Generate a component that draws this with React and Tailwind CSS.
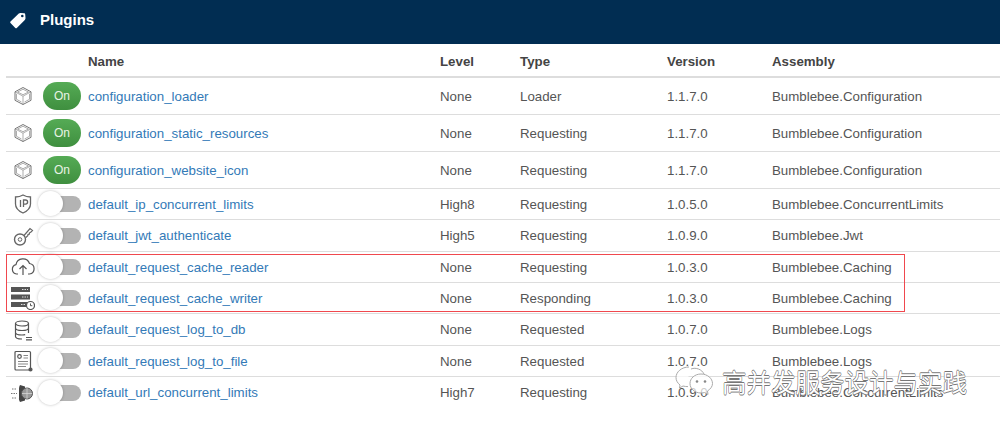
import React from 'react';

const plugins = [
  { icon: 'box', on: true, name: 'configuration_loader', level: 'None', type: 'Loader', version: '1.1.7.0', assembly: 'Bumblebee.Configuration', h: 'h-[37px]' },
  { icon: 'box', on: true, name: 'configuration_static_resources', level: 'None', type: 'Requesting', version: '1.1.7.0', assembly: 'Bumblebee.Configuration', h: 'h-[37px]' },
  { icon: 'box', on: true, name: 'configuration_website_icon', level: 'None', type: 'Requesting', version: '1.1.7.0', assembly: 'Bumblebee.Configuration', h: 'h-[37px]' },
  { icon: 'ip', on: false, name: 'default_ip_concurrent_limits', level: 'High8', type: 'Requesting', version: '1.0.5.0', assembly: 'Bumblebee.ConcurrentLimits', h: 'h-[31px]' },
  { icon: 'key', on: false, name: 'default_jwt_authenticate', level: 'High5', type: 'Requesting', version: '1.0.9.0', assembly: 'Bumblebee.Jwt', h: 'h-[32px]' },
  { icon: 'cloud', on: false, name: 'default_request_cache_reader', level: 'None', type: 'Requesting', version: '1.0.3.0', assembly: 'Bumblebee.Caching', h: 'h-[31px]' },
  { icon: 'server', on: false, name: 'default_request_cache_writer', level: 'None', type: 'Responding', version: '1.0.3.0', assembly: 'Bumblebee.Caching', h: 'h-[31px]' },
  { icon: 'db', on: false, name: 'default_request_log_to_db', level: 'None', type: 'Requested', version: '1.0.7.0', assembly: 'Bumblebee.Logs', h: 'h-[32px]' },
  { icon: 'file', on: false, name: 'default_request_log_to_file', level: 'None', type: 'Requested', version: '1.0.7.0', assembly: 'Bumblebee.Logs', h: 'h-[31px]' },
  { icon: 'limit', on: false, name: 'default_url_concurrent_limits', level: 'High7', type: 'Requesting', version: '1.0.9.0', assembly: 'Bumblebee.ConcurrentLimits', h: 'h-[31px] border-b-0' },
];

const RowIcon = ({ kind }) => {
  const common = { width: 24, height: 24, viewBox: '0 0 24 24', fill: 'none', stroke: '#777', strokeWidth: 1 };
  if (kind === 'box') {
    return (
      <svg {...common}>
        <path d="M12 3.500l8 4.300v8.500L12 20.500l-8-4.200V7.800z" />
        <path d="M4 7.800l8 4.400 8-4.400M12 12.200v8.300M5.500 9.800v5.500l5 2.700M18.500 9.800v5.500l-5 2.700M12 5.200l5.500 2.800-5.500 2.700-5.500-2.700z" strokeWidth=".6" />
      </svg>
    );
  }
  if (kind === 'ip') {
    return (
      <svg {...common} stroke="#666">
        <path d="M12 3c2.500 1.500 5 2 7.500 2v7c0 4-3 7-7.500 9-4.500-2-7.500-5-7.500-9V5C7 5 9.500 4.500 12 3z" strokeWidth="1.300" />
        <path d="M9.500 8v7M12.500 15V8h2a2 2 0 010 4.200h-2" strokeWidth="1.300" />
      </svg>
    );
  }
  if (kind === 'key') {
    return (
      <svg {...common} stroke="#666">
        <circle cx="9" cy="15.500" r="5.500" strokeWidth="1.400" />
        <circle cx="9" cy="15.500" r="1.800" />
        <path d="M13 11.500l6-7 2.500 2-2 2-1 .2-.2 1.500-1.300.3-.2 1.200-2 1.800" strokeWidth="1.200" />
      </svg>
    );
  }
  if (kind === 'cloud') {
    return (
      <svg {...common} stroke="#555" strokeWidth="1.200">
        <path d="M7 19H5.500a4.800 4.800 0 01-.5-9.400A7 7 0 0118.500 8.500 5.300 5.300 0 0118.500 19H17" />
        <path d="M12 20v-9M8.500 14L12 10.500l3.500 3.500" />
      </svg>
    );
  }
  if (kind === 'server') {
    return (
      <svg width="24" height="24" viewBox="0 0 24 24">
        <rect x="0" y="1" width="19" height="5" fill="#555" />
        <rect x="0" y="8.500" width="19" height="5" fill="#555" />
        <rect x="0" y="16" width="17" height="5" fill="#555" />
        <path d="M11 3.500h6M11 11h6M10 18.500h5" stroke="#ddd" strokeWidth="1.200" strokeDasharray="1.500 1" />
        <circle cx="19.500" cy="19.500" r="4" fill="#fff" stroke="#555" strokeWidth="1.200" />
        <path d="M19.500 17.500v2.200h1.800" fill="none" stroke="#555" strokeWidth="1" />
      </svg>
    );
  }
  if (kind === 'db') {
    return (
      <svg {...common} strokeWidth="1.200" stroke="#555">
        <ellipse cx="11" cy="5.500" rx="6.500" ry="2.500" />
        <path d="M4.500 5.500v13c0 1.400 2.900 2.500 6.500 2.500M17.500 5.500V15M4.500 10c0 1.400 2.900 2.500 6.500 2.500s6.500-1.100 6.500-2.500M4.500 14.500c0 1.400 2.900 2.500 6.500 2.500 1.200 0 2.300-.1 3.200-.3" />
        <path d="M15 19.500h6M15 21.800h6" />
      </svg>
    );
  }
  if (kind === 'file') {
    return (
      <svg {...common} strokeWidth="1.200" stroke="#555">
        <rect x="4" y="2.500" width="15.500" height="18.500" rx="1" />
        <circle cx="8.500" cy="7.500" r="1.800" />
        <path d="M12.500 6.500h4.500M12.500 9h4.500M7 12.500h10M7 15h10M7 17.500h8" stroke="#888" />
        <circle cx="19.500" cy="20.500" r="1.500" fill="#555" />
      </svg>
    );
  }
  return (
    <svg width="24" height="24" viewBox="0 0 24 24">
      <path d="M9 4l5 1.500v14L9 21c-1-2-1.200-3-1-4V8c0-1 0-2 1-4z" fill="#444" />
      <circle cx="16" cy="12.500" r="5.500" fill="#999" stroke="#555" />
      <path d="M16 7v11M11 12.500h10" stroke="#ddd" strokeWidth=".7" />
      <path d="M1 8h5M0 12.500h6M1 17h5" stroke="#777" strokeWidth="1.100" strokeDasharray="1.500 1" />
    </svg>
  );
};

const Toggle = ({ on }) =>
  on ? (
    <div className="w-[38px] h-[28px] rounded-full bg-gradient-to-b from-[#55ab55] to-[#3f8f3f] flex items-center justify-center text-[12px] text-[#e8f3e6]">
      On
    </div>
  ) : (
    <div className="relative w-[38px] h-[16px] rounded-full bg-[#b3b3b3]">
      <div className="absolute left-[-5px] top-[-5px] w-[25px] h-[25px] rounded-full bg-white shadow-[0_0_3px_rgba(0,0,0,0.25)]" />
    </div>
  );

const App = () => (
  <div
    className="relative w-[1000px] h-[426px] overflow-hidden bg-white text-[13.3px] text-[#555]"
    style={{ fontFamily: '"Liberation Sans", Arial, sans-serif' }}
  >
    {/* Header */}
    <div className="h-[44px] bg-[#012d52] flex items-center pl-[9px] gap-[14px] text-white pb-[4px]">
      <svg width="17" height="17" viewBox="0 0 17 17">
        <path d="M1.500 9.500L9.800 1.600C10.400 1 11 .9 11.800 1l3.500.3c.6.1.9.4.9 1l.3 3.700c.1.800-.2 1.400-.7 1.900l-8 8c-.5.500-1 .5-1.500 0l-4.800-4.900c-.5-.5-.5-1 0-1.500z" fill="#fff" />
        <circle cx="13.300" cy="4" r="1.300" fill="#012d52" />
      </svg>
      <span className="text-[15px] font-bold">Plugins</span>
    </div>

    {/* Table */}
    <div className="ml-[6px]">
      <div className="grid grid-cols-[82px_352px_80px_147px_105px_1fr] items-center h-[34px] border-b-2 border-[#ddd] font-bold text-[#444] pt-[4px]">
        <span />
        <span>Name</span>
        <span>Level</span>
        <span>Type</span>
        <span>Version</span>
        <span>Assembly</span>
      </div>
      {plugins.map((p) => (
        <div key={p.name} className={`grid grid-cols-[82px_352px_80px_147px_105px_1fr] items-center border-b border-[#ddd] ${p.h}`}>
          <div className="flex items-center">
            <div className="w-[24px] ml-[5px] flex justify-center">
              <RowIcon kind={p.icon} />
            </div>
            <div className="ml-[8px]">
              <Toggle on={p.on} />
            </div>
          </div>
          <span className="text-[#337ab7] pt-[1px]">{p.name}</span>
          <span className="pt-[1px]">{p.level}</span>
          <span className="pt-[1px]">{p.type}</span>
          <span className="pt-[1px]">{p.version}</span>
          <span className="pt-[1px]">{p.assembly}</span>
        </div>
      ))}
    </div>

    {/* Highlight box */}
    <div className="absolute left-[6px] top-[254px] w-[899px] h-[58px] border border-[#f0484e]" />

    {/* Watermark */}
    <div className="absolute left-[675px] top-[366px] flex items-center gap-[7px]">
      <svg width="40" height="32" viewBox="0 0 40 32" fill="rgba(255,255,255,0.7)" stroke="#aaa" strokeWidth="1">
        <path d="M14 1C6.500 1 1 6 1 11.500c0 3 1.500 5.500 4 7.500l-.5 3 3.500-2c1.500.4 3 .6 5 .6" />
        <path d="M16 3c5-2 11 .5 13 5" />
        <path d="M26 8c-6.500 0-11 4.500-11 9.500S19.500 27 26 27c1.500 0 2.500-.2 3.500-.5l3.500 2-.5-3.500c3-2 5-4.500 5-7.500C37.500 12.500 32.500 8 26 8z" />
        <circle cx="22" cy="15.500" r="1.300" fill="#888" stroke="none" />
        <circle cx="30" cy="15.500" r="1.300" fill="#888" stroke="none" />
      </svg>
      <span
        className="text-[24.500px] leading-none text-white whitespace-nowrap"
        style={{ fontFamily: '"Noto Sans CJK SC", sans-serif', textShadow: '0.6px 0 #777, -0.6px 0 #777, 0 0.6px #777, 0 -0.6px #777' }}
      >
        高并发服务设计与实践
      </span>
    </div>
  </div>
);

export default App;
